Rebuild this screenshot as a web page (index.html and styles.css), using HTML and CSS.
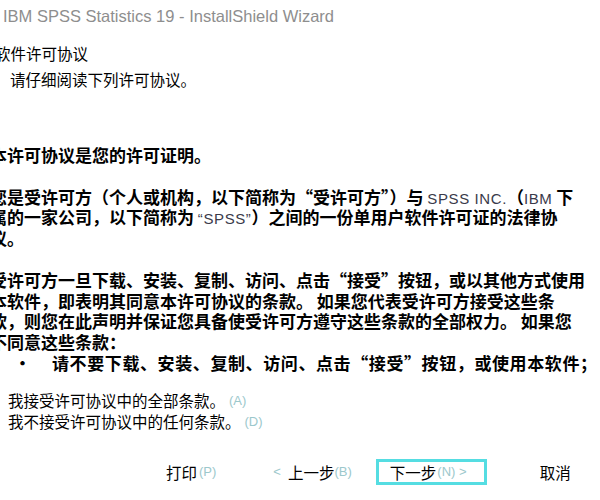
FILE: index.html
```html
<!DOCTYPE html>
<html lang="zh-CN">
<head>
<meta charset="utf-8">
<title>IBM SPSS Statistics 19 - InstallShield Wizard</title>
<link rel="stylesheet" href="styles.css">
</head>
<body>
<div class="window">
  <div class="titlebar">IBM SPSS Statistics 19 - InstallShield Wizard</div>
  <div class="header">
    <div class="heading">软件许可协议</div>
    <div class="subheading">请仔细阅读下列许可协议。</div>
  </div>
  <div class="license">
    <div class="line">本许可协议是您的许可证明。</div>
    <div class="line blank"></div>
    <div class="line">您是受许可方（个人或机构，以下简称为“受许可方”）与 <span class="latin">SPSS INC.</span>（<span class="latin">IBM</span> 下</div>
    <div class="line">属的一家公司，以下简称为 <span class="latin">“SPSS”</span>）之间的一份单用户软件许可证的法律协</div>
    <div class="line">议。</div>
    <div class="line blank"></div>
    <div class="line">受许可方一旦下载、安装、复制、访问、点击“接受”按钮，或以其他方式使用</div>
    <div class="line">本软件，即表明其同意本许可协议的条款。 如果您代表受许可方接受这些条</div>
    <div class="line">款，则您在此声明并保证您具备使受许可方遵守这些条款的全部权力。 如果您</div>
    <div class="line">不同意这些条款：</div>
    <div class="line bullet"><span class="dot">•</span><span class="bullet-text">请不要下载、安装、复制、访问、点击“接受”按钮，或使用本软件；</span></div>
  </div>
  <div class="options">
    <div class="option">我接受许可协议中的全部条款。 <span class="key">(A)</span></div>
    <div class="option">我不接受许可协议中的任何条款。 <span class="key">(D)</span></div>
  </div>
  <div class="buttons">
    <div class="btn print">打印<span class="key">(P)</span></div>
    <div class="btn back"><span class="key lt">&lt;</span>上一步<span class="key">(B)</span></div>
    <div class="btn next">下一步<span class="key">(N) &gt;</span></div>
    <div class="btn cancel">取消</div>
  </div>
</div>
</body>
</html>
```
FILE: styles.css
```css
html, body {
  margin: 0;
  padding: 0;
  background: #ffffff;
  overflow: hidden;
}
body {
  width: 600px;
  height: 500px;
}
.window {
  font-family: "Noto Sans CJK SC", "Liberation Sans", sans-serif;
  color: #000;
}
.titlebar {
  height: 32px;
  line-height: 32px;
  padding-left: 3px;
  font-family: "Liberation Sans", "Noto Sans CJK SC", sans-serif;
  font-size: 16.5px;
  color: #8e8e8e;
  white-space: nowrap;
}
.header {
  font-size: 15.5px;
  white-space: nowrap;
}
.heading {
  height: 26px;
  line-height: 26px;
  margin-top: 8px;
  margin-left: -5px;
}
.subheading {
  height: 26px;
  line-height: 26px;
  padding-left: 10px;
}
.license {
  margin-top: 53px;
  margin-left: -10px;
  font-size: 17px;
  font-weight: 700;
  line-height: 20.8px;
  white-space: nowrap;
}
.line {
  height: 20.8px;
}
.latin {
  font-family: "Liberation Sans", sans-serif;
  font-weight: 400;
  font-size: 15px;
  letter-spacing: 0.6px;
  color: #3a3a4a;
}
.bullet {
  display: flex;
}
.dot {
  flex: none;
  width: 62px;
  padding-left: 24px;
  box-sizing: border-box;
}
.bullet-text {
  flex: none;
  letter-spacing: 0.6px;
}
.options {
  margin-top: 16px;
  padding-left: 8px;
  font-size: 15.5px;
  white-space: nowrap;
}
.option {
  height: 21px;
  line-height: 21px;
  display: flex;
  align-items: center;
}
.option .key {
  margin-left: 4px;
}
.key {
  font-family: "Liberation Sans", sans-serif;
  font-size: 13px;
  color: #9cc8cc;
}
.buttons {
  margin-top: 27px;
  height: 26px;
  display: flex;
  align-items: center;
  font-size: 15.5px;
  white-space: nowrap;
}
.btn {
  box-sizing: border-box;
  height: 26px;
  display: flex;
  align-items: center;
}
.print {
  margin-left: 166px;
}
.print .key {
  margin-left: 2px;
}
.back {
  margin-left: 57px;
}
.back .lt {
  margin-right: 7px;
}
.next {
  margin-left: 24px;
  width: 111px;
  border: 3px solid #55dde2;
  padding-left: 11px;
}
.next .key {
  margin-left: 1px;
}
.cancel {
  margin-left: 53px;
}
```
